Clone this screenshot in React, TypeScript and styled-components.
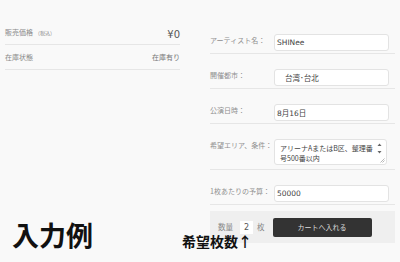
import React from "react";
import styled, { createGlobalStyle } from "styled-components";

const Global = createGlobalStyle`
  html, body { margin: 0; padding: 0; background: #f9f9f9; }
  body { width: 400px; height: 262px; overflow: hidden; font-family: "Noto Sans CJK JP", "Noto Sans", sans-serif; }
`;

const Page = styled.div`
  position: relative;
  display: grid;
  grid-template-columns: 200px 200px;
  width: 400px;
  height: 262px;
  background: #f9f9f9;
`;

const LeftCol = styled.div`
  display: flex;
  flex-direction: column;
  padding: 20px 20px 14px 5px;
`;

const InfoRow = styled.div<{ $h: number }>`
  display: flex;
  align-items: center;
  justify-content: space-between;
  height: ${(p) => p.$h}px;
  border-bottom: 1px solid #e6e6e6;
`;

const InfoLabel = styled.span`
  font-size: 7px;
  color: #8a8a8a;
  line-height: 1;
`;

const Small = styled.span`
  font-size: 5px;
  margin-left: 2px;
`;

const Price = styled.span`
  font-family: "DejaVu Sans", sans-serif;
  font-size: 10px;
  color: #555;
  padding-top: 5px;
  line-height: 1;
`;

const InfoValue = styled.span`
  font-size: 7px;
  color: #777;
  line-height: 1;
`;

const Example = styled.div`
  margin-top: auto;
  margin-left: 7px;
  font-size: 27px;
  font-weight: 700;
  line-height: 1;
  color: #111;
`;

const RightCol = styled.div`
  display: flex;
  flex-direction: column;
  padding: 19px 5px 0 10px;
`;

const FormRow = styled.div<{ $pb: number }>`
  display: grid;
  grid-template-columns: 64px 115px;
  align-items: start;
  padding: 15px 0 ${(p) => p.$pb}px;
  border-bottom: 1px solid #e6e6e6;
`;

const FieldLabel = styled.label`
  font-size: 7px;
  color: #8f8f8f;
  line-height: 1;
  padding-top: 3px;
  white-space: nowrap;
`;

const Field = styled.div<{ $indent?: number }>`
  box-sizing: border-box;
  height: 17px;
  display: flex;
  align-items: center;
  padding-left: ${(p) => p.$indent ?? 2}px;
  background: #fff;
  border: 1px solid #e3e3e3;
  border-radius: 3px;
  font-family: "DejaVu Sans", "Noto Sans CJK JP", sans-serif;
  font-size: 7.5px;
  color: #444;
`;

const AreaWrap = styled.div`
  position: relative;
  box-sizing: border-box;
  width: 113px;
  height: 26px;
  background: #fff;
  border: 1px solid #e3e3e3;
  border-radius: 3px;
`;

const AreaText = styled.div`
  padding: 3px 12px 0 5px;
  font-size: 7px;
  line-height: 10px;
  color: #444;
`;

const ScrollArrows = styled.svg`
  position: absolute;
  right: 4px;
  top: 3px;
`;

const Grip = styled.svg`
  position: absolute;
  right: 1px;
  bottom: 1px;
`;

const CartBox = styled.div`
  display: flex;
  align-items: center;
  margin-top: 6px;
  height: 32px;
  padding-left: 8px;
  background: #efefef;
`;

const QtyLabel = styled.span`
  font-size: 7.5px;
  color: #888;
  line-height: 1;
`;

const QtyInput = styled.div`
  width: 13px;
  height: 13px;
  margin: 0 4px 0 7px;
  background: #fff;
  display: flex;
  align-items: center;
  justify-content: center;
  font-family: "DejaVu Sans", sans-serif;
  font-size: 8px;
  color: #555;
`;

const CartButton = styled.button`
  margin-left: 8px;
  width: 99px;
  height: 19px;
  border: none;
  border-radius: 2px;
  background: #333;
  color: #ddd;
  font-family: "Noto Sans CJK JP", sans-serif;
  font-size: 7px;
  padding: 0;
  cursor: pointer;
`;

const Note = styled.div`
  position: absolute;
  left: 182px;
  top: 234px;
  font-size: 14px;
  font-weight: 700;
  line-height: 1;
  color: #111;
  white-space: nowrap;
`;

export default function App() {
  return (
    <>
      <Global />
      <Page>
        <LeftCol>
          <InfoRow $h={24}>
            <InfoLabel>
              販売価格<Small>（税込）</Small>
            </InfoLabel>
            <Price>¥0</Price>
          </InfoRow>
          <InfoRow $h={24}>
            <InfoLabel>在庫状態</InfoLabel>
            <InfoValue>在庫有り</InfoValue>
          </InfoRow>
          <Example>入力例</Example>
        </LeftCol>
        <RightCol>
          <FormRow $pb={2}>
            <FieldLabel>アーティスト名：</FieldLabel>
            <Field>SHINee</Field>
          </FormRow>
          <FormRow $pb={2}>
            <FieldLabel>開催都市：</FieldLabel>
            <Field $indent={10}>台湾･台北</Field>
          </FormRow>
          <FormRow $pb={2}>
            <FieldLabel>公演日時：</FieldLabel>
            <Field>8月16日</Field>
          </FormRow>
          <FormRow $pb={4}>
            <FieldLabel>希望エリア、条件：</FieldLabel>
            <AreaWrap>
              <AreaText>アリーナAまたはB区、整理番号500番以内</AreaText>
              <ScrollArrows width="5" height="12" viewBox="0 0 5 12">
                <path d="M2.5 0.5 L4.5 3 L0.5 3 Z" fill="#666" />
                <path d="M0.5 8 L4.5 8 L2.5 10.5 Z" fill="#666" />
              </ScrollArrows>
              <Grip width="5" height="5" viewBox="0 0 5 5">
                <path d="M0.5 4.5 L4.5 0.5 M2.5 4.5 L4.5 2.5" stroke="#999" strokeWidth="0.7" />
              </Grip>
            </AreaWrap>
          </FormRow>
          <FormRow $pb={2}>
            <FieldLabel>1枚あたりの予算：</FieldLabel>
            <Field>50000</Field>
          </FormRow>
          <CartBox>
            <QtyLabel>数量</QtyLabel>
            <QtyInput>2</QtyInput>
            <QtyLabel>枚</QtyLabel>
            <CartButton>カートへ入れる</CartButton>
          </CartBox>
        </RightCol>
        <Note>希望枚数↑</Note>
      </Page>
    </>
  );
}
